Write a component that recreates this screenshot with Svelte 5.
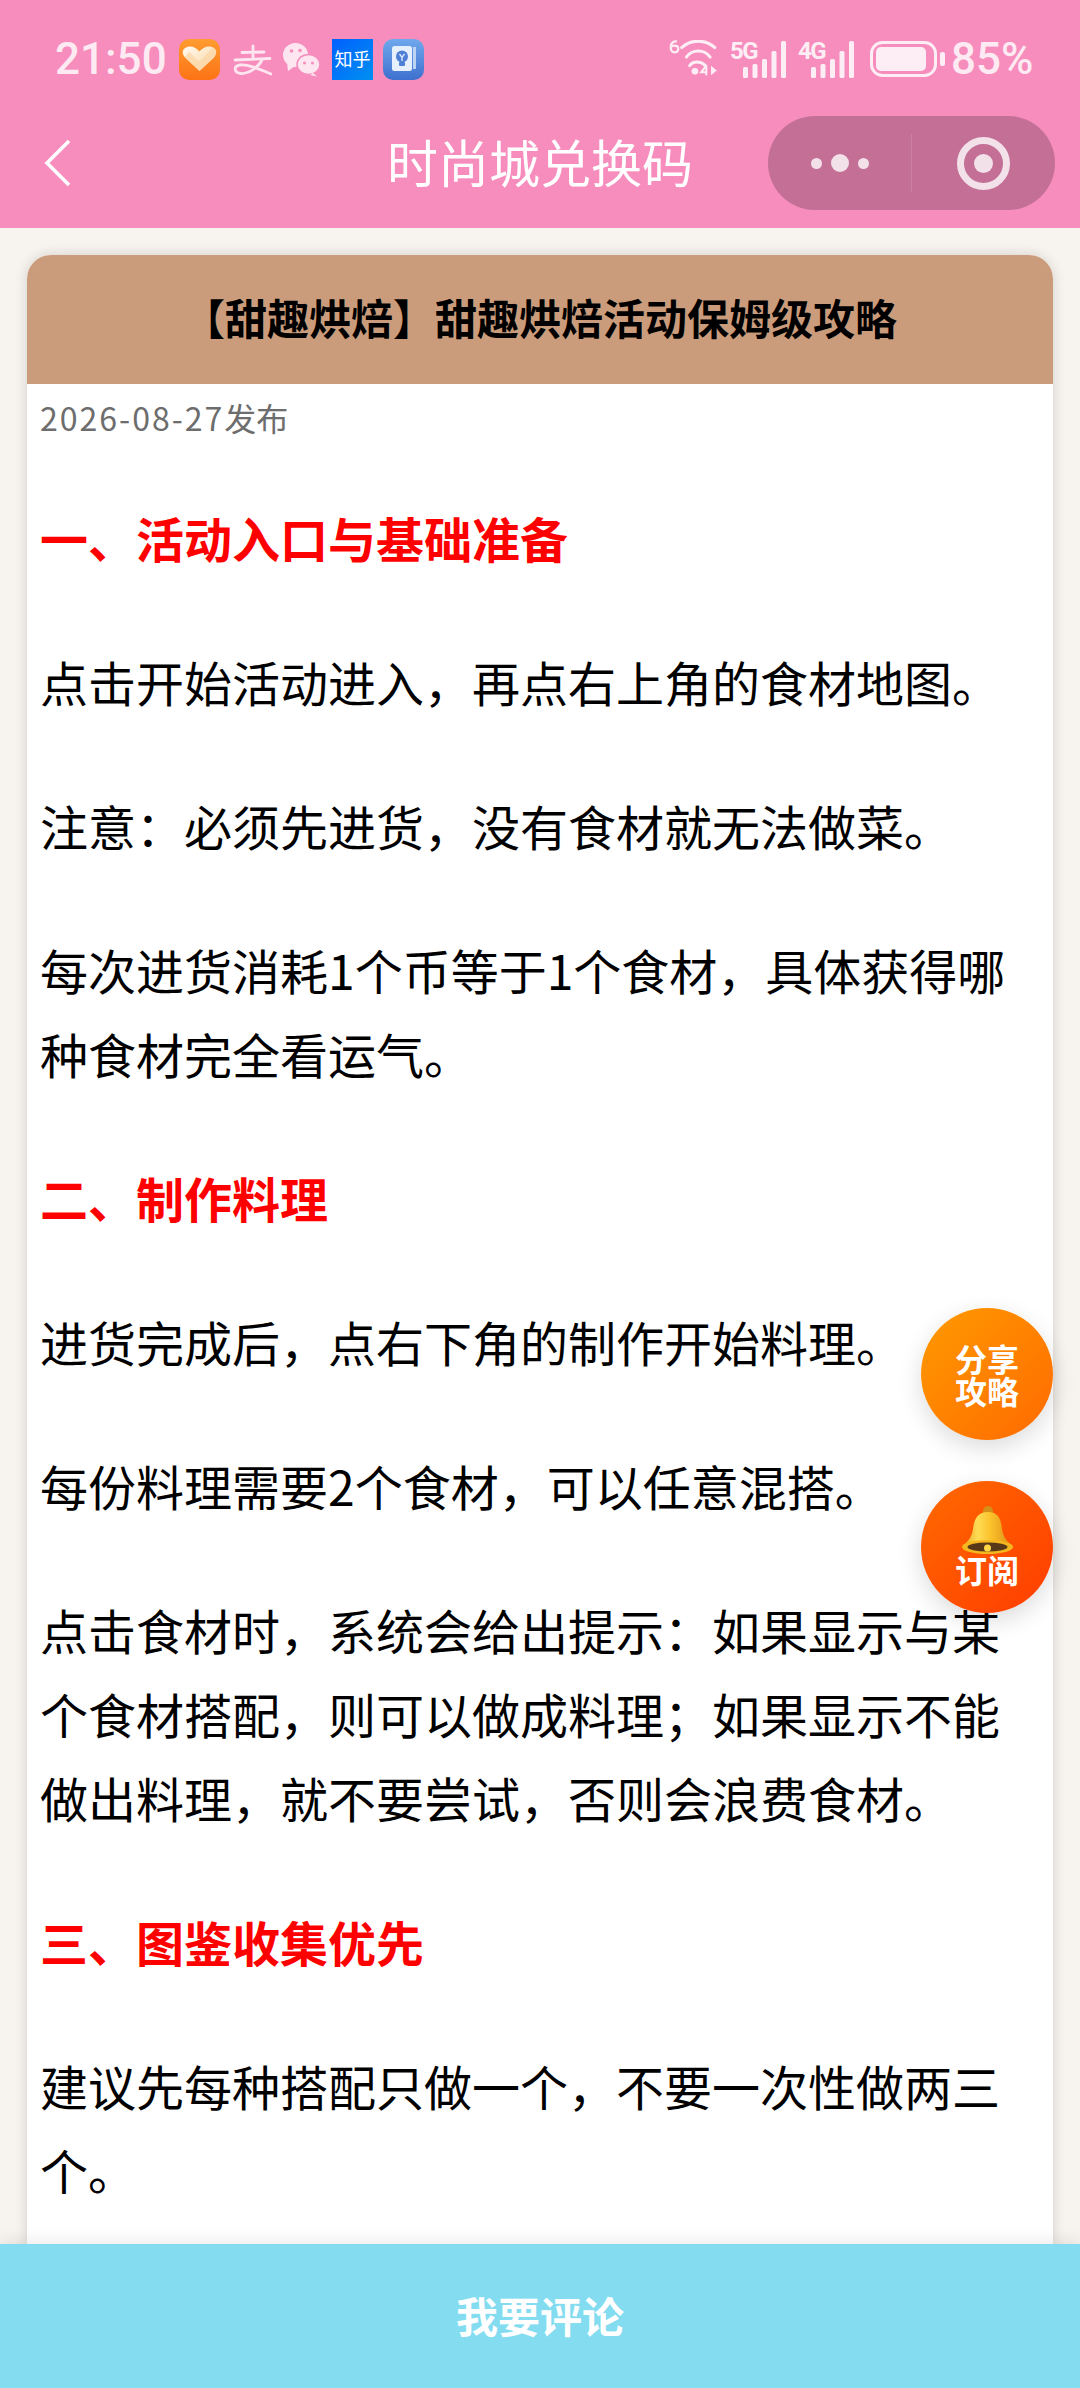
<script>
  const blocks = [
    { h: '一、活动入口与基础准备' },
    { p: '点击开始活动进入，再点右上角的食材地图。' },
    { p: '注意：必须先进货，没有食材就无法做菜。' },
    { p: '每次进货消耗1个币等于1个食材，具体获得哪种食材完全看运气。' },
    { h: '二、制作料理' },
    { p: '进货完成后，点右下角的制作开始料理。' },
    { p: '每份料理需要2个食材，可以任意混搭。' },
    { p: '点击食材时，系统会给出提示：如果显示与某个食材搭配，则可以做成料理；如果显示不能做出料理，就不要尝试，否则会浪费食材。' },
    { h: '三、图鉴收集优先' },
    { p: '建议先每种搭配只做一个，不要一次性做两三个。' }
  ];
  const bars = [
    [0, 11], [9.5, 14], [19, 19], [28.5, 27], [38, 37]
  ];
</script>

{#snippet signal(label)}
  <span class="sig">
    <span class="net">{label}</span>
    <svg width="43" height="37" viewBox="0 0 43 37" fill="#fdeef5">
      {#each bars as [x, h]}
        <rect x={x} y={37 - h} width="5" height={h} rx="1.500" />
      {/each}
    </svg>
  </span>
{/snippet}

<div class="page">
  <header class="top">
    <div class="status">
      <div class="left">
        <span class="time">21:50</span>
        <svg class="ic heart" width="41" height="41" viewBox="0 0 41 41">
          <defs>
            <linearGradient id="o" x1="0" y1="0" x2="0" y2="1"><stop offset="0" stop-color="#ff9c30"/><stop offset="1" stop-color="#fd7316"/></linearGradient>
            <linearGradient id="h" x1="0" y1="0" x2="1" y2="1"><stop offset="0" stop-color="#fffaf2"/><stop offset="1" stop-color="#fbd49c"/></linearGradient>
          </defs>
          <rect width="41" height="41" rx="10" fill="url(#o)"/>
          <path d="M20.500 32L6 18.500C1 12.500 5 7.500 11 7.500C15 7.500 18 9.500 20.500 12.500C23 9.500 26 7.500 30 7.500C36 7.500 40 12.500 35 18.500Z" fill="url(#h)"/>
          <path d="M20.500 32L35 18.500C38 14.500 37 10.500 34 8.500L20 22.500L10 12.500L6 18.500Z" fill="#fbd7a8" opacity=".75"/>
        </svg>
        <svg class="ic ali" width="39" height="33" viewBox="0 0 39 33" fill="none" stroke="#fde6f0" stroke-width="2.800" stroke-linecap="round">
          <path d="M20 3V16M9 9.500L31 9M2 17L37 15.500"/>
          <path d="M29 17C25 25 15 31 8 30.500C1 30 0 23 7 22C15 21 26 26 38 31"/>
        </svg>
        <svg class="ic chat" width="37" height="34" viewBox="0 0 37 34" fill="#fde6f0">
          <ellipse cx="12.500" cy="12" rx="12.500" ry="12"/>
          <path d="M4 19L5 28L12 23Z"/>
          <ellipse cx="25.500" cy="21.500" rx="11.500" ry="10" stroke="#f78dbd" stroke-width="1.500"/>
          <path d="M30 30L34 33.500L27 32Z"/>
          <circle cx="8.500" cy="8" r="1.800" fill="#f78dbd"/><circle cx="17" cy="7.500" r="1.800" fill="#f78dbd"/>
          <circle cx="21.500" cy="20" r="1.500" fill="#f78dbd"/><circle cx="29.500" cy="20" r="1.500" fill="#f78dbd"/>
        </svg>
        <span class="zhihu">知乎</span>
        <svg class="ic" width="41" height="41" viewBox="0 0 41 41">
          <defs><linearGradient id="b" x1="0" y1="0" x2="0" y2="1"><stop offset="0" stop-color="#6fa8ec"/><stop offset="1" stop-color="#3e70cf"/></linearGradient></defs>
          <rect width="41" height="41" rx="10" fill="url(#b)"/>
          <rect x="9" y="7" width="20" height="25" rx="2.500" fill="#e6f0fc"/>
          <rect x="30" y="8" width="3" height="22" fill="#bcd4f2"/>
          <circle cx="19" cy="17.500" r="6" fill="#4d7fd6"/>
          <rect x="16" y="23" width="6" height="4" rx="1" fill="#4d7fd6"/>
          <path d="M16.500 15L19 18.500L21.500 15M19 18.500V22" fill="none" stroke="#dfeafb" stroke-width="1.300"/>
        </svg>
      </div>
      <div class="right">
        <svg class="wifi" width="51" height="38" viewBox="0 0 51 40" fill="none" stroke="#fdeef5" stroke-width="3.200">
          <path d="M1.500 7C2 3 4.500 1 8 1.500M1.500 7C1.500 11 3 13 5.500 13C8 13 9.500 11.500 9.500 9.500C9.500 7.500 8 6 5.500 6C3.500 6 2 7 1.500 8" stroke-width="2.400"/>
          <path d="M13 8C23 -1 38 -1 48 8" stroke-linecap="round"/>
          <path d="M18 18C24 9.500 37 9.500 43 18" stroke-linecap="round"/>
          <path d="M21.500 27C25 22 33 22 38 27" stroke-linecap="round"/>
          <circle cx="27" cy="33" r="3.500" fill="#fdeef5" stroke="none"/>
          <path d="M39 27V37M39 27L33.500 34H39" stroke-width="2.200"/>
          <path d="M44 27V37L50 32Z" fill="#fdeef5" stroke="none"/>
        </svg>
        {@render signal('5G')}
        {@render signal('4G')}
        <svg class="batt" width="75" height="36" viewBox="0 0 75 36">
          <rect x="1.500" y="1.500" width="64" height="33" rx="11" fill="none" stroke="#fdeef5" stroke-width="3"/>
          <rect x="6" y="6" width="50" height="24" rx="5" fill="#fdeef5"/>
          <rect x="70" y="11" width="5" height="14" rx="2" fill="#fdeef5"/>
        </svg>
        <span class="pct">85%</span>
      </div>
    </div>
    <nav class="nav">
      <svg class="back" width="28" height="50" viewBox="0 0 28 50" fill="none" stroke="#fff" stroke-width="3.600"><path d="M25 2L3 24L25 46"/></svg>
      <h1>时尚城兑换码</h1>
      <div class="capsule">
        <div class="dots"><i></i><b></b><i></i></div>
        <span class="sep"></span>
        <div class="rec"><span></span></div>
      </div>
    </nav>
  </header>

  <main class="body">
    <article class="card">
      <div class="card-head">【甜趣烘焙】甜趣烘焙活动保姆级攻略</div>
      <div class="content">
        <div class="date"><span class="num">2026-08-27</span>发布</div>
        {#each blocks as b}
          {#if b.h}<h2>{b.h}</h2>{:else}<p>{b.p}</p>{/if}
        {/each}
      </div>
    </article>
    <div class="fab share"><span>分享<br />攻略</span></div>
    <div class="fab sub">
      <svg width="51" height="48" viewBox="0 0 51 48">
        <defs>
          <linearGradient id="bell" x1="0" y1="0" x2="1" y2="0">
            <stop offset="0" stop-color="#e8a31c"/><stop offset=".3" stop-color="#ffdc55"/><stop offset=".55" stop-color="#fcc32e"/><stop offset="1" stop-color="#dc8d12"/>
          </linearGradient>
        </defs>
        <circle cx="26" cy="5" r="5" fill="#d68f18"/>
        <path d="M26 6C37 6 39 14 40 23C41 31 45 35 50 40H1C6 35 10 31 11 23C12 14 15 6 26 6Z" fill="url(#bell)"/>
        <ellipse cx="25.500" cy="41" rx="25.500" ry="7" fill="#f5b71f"/>
        <ellipse cx="25.500" cy="41" rx="20" ry="4.500" fill="#57391a"/>
        <circle cx="25.500" cy="42" r="3.500" fill="#ffd84a"/>
      </svg>
      <span class="sub-label">订阅</span>
    </div>
  </main>

  <footer class="foot">我要评论</footer>
</div>

<style>
  :global(body) { margin: 0; }
  .page {
    width: 1080px; height: 2388px; overflow: hidden;
    display: flex; flex-direction: column;
    background: #f7f4ef;
    font-family: "Noto Sans CJK SC", "Noto Sans", sans-serif;
  }
  .top { background: #f78dbd; height: 228px; flex: none; color: #fff; display: flex; flex-direction: column; }
  .status { height: 114px; flex: none; display: flex; justify-content: space-between; align-items: flex-start; padding: 38px 49px 0 55px; box-sizing: border-box; }
  .left { display: flex; align-items: center; height: 43px; }
  .time { font: 500 44px/43px Roboto, sans-serif; color: #fdeaf3; width: 124px; flex: none; }
  .ic { flex: none; }
  .heart { margin-right: 13px; }
  .ali { margin-right: 11px; }
  .chat { margin-right: 12px; }
  .zhihu {
    width: 41px; height: 41px; flex: none; margin-right: 10px; background: linear-gradient(135deg,#0060ff,#0090f0);
    color: #fff; font-size: 18px; line-height: 39px; text-align: center; white-space: nowrap; overflow: hidden;
  }
  .right { display: flex; align-items: flex-start; }
  .wifi { margin-top: 2px; margin-right: 11px; flex: none; }
  .sig { position: relative; display: block; width: 56px; height: 37px; margin-right: 12px; margin-top: 3px; flex: none; }
  .sig svg { position: absolute; left: 13px; top: 0; }
  .net { position: absolute; left: 0; top: 0; font: 700 24px/20px Roboto, sans-serif; letter-spacing: -1.500px; color: #fdeef5; white-space: nowrap; }
  .batt { margin-top: 3px; margin-left: 4px; flex: none; }
  .pct { font: 500 44px/43px Roboto, sans-serif; margin-left: 6px; color: #fdeaf3; width: 80px; white-space: nowrap; }

  .nav { position: relative; height: 114px; flex: none; display: flex; align-items: center; justify-content: center; }
  .back { position: absolute; left: 44px; top: 25px; }
  h1 { margin: 0 0 21px; font-weight: 400; font-size: 51px; color: #fff; line-height: 60px; }
  .capsule {
    position: absolute; left: 768px; top: 2px; width: 287px; height: 94px; border-radius: 47px;
    background: #c36f96; display: flex; align-items: center;
  }
  .dots { width: 143px; display: flex; align-items: center; justify-content: center; gap: 9px; }
  .dots i { width: 11px; height: 11px; border-radius: 50%; background: #f3e1ea; }
  .dots b { width: 18px; height: 18px; border-radius: 50%; background: #f3e1ea; }
  .sep { width: 1px; height: 58px; background: #cc7fa2; }
  .rec { flex: 1; display: flex; align-items: center; justify-content: center; }
  .rec span { width: 39px; height: 39px; border: 7px solid #f3e1ea; border-radius: 50%; position: relative; display: block; }
  .rec span::after { content: ""; position: absolute; inset: 10px; border-radius: 50%; background: #f3e1ea; }

  .body { flex: 1; min-height: 0; position: relative; overflow: hidden; padding: 27px 27px 0; }
  .card { background: #fff; border-radius: 24px 24px 0 0; box-shadow: 0 0 14px rgba(0,0,0,.14); min-height: 2100px; }
  .card-head {
    height: 129px; background: #cb9c7b; border-radius: 24px 24px 0 0; color: #000;
    display: flex; align-items: center; justify-content: center; box-sizing: border-box; padding-bottom: 6px;
    font-size: 42px; font-weight: 700;
  }
  .content { padding: 0 13px; }
  .date { font-size: 32px; line-height: 60px; color: #6d6d6d; margin-top: 3px; }
  .num { letter-spacing: 2px; }
  h2 { margin: 0 0 60px; color: #f00; font-size: 48px; font-weight: 700; line-height: 84px; }
  .date + h2 { margin-top: 48px; }
  p { margin: 0 0 60px; font-size: 48px; line-height: 84px; color: #000; }
  .fab {
    position: absolute; left: 921px; width: 132px; height: 132px; border-radius: 50%;
    color: #fff; font-weight: 700; font-size: 32px; line-height: 32px; text-align: center;
    box-shadow: 0 8px 24px rgba(0,0,0,.14);
    display: flex; flex-direction: column; align-items: center; justify-content: center;
    box-sizing: border-box;
  }
  .share { top: 1080px; background: linear-gradient(135deg,#ff9a00,#ff6a00); }
  .sub { top: 1253px; background: linear-gradient(135deg,#ff6a00,#ff3c00); padding-bottom: 4px; }
  .sub-label { margin-top: -1px; }
  .foot {
    position: relative; height: 144px; flex: none; background: #84dcf1; color: #fff; box-sizing: border-box; padding-bottom: 4px;
    display: flex; align-items: center; justify-content: center;
    font-size: 42px; font-weight: 700;
    box-shadow: 0 -4px 14px rgba(0,0,0,.08);
  }
</style>
